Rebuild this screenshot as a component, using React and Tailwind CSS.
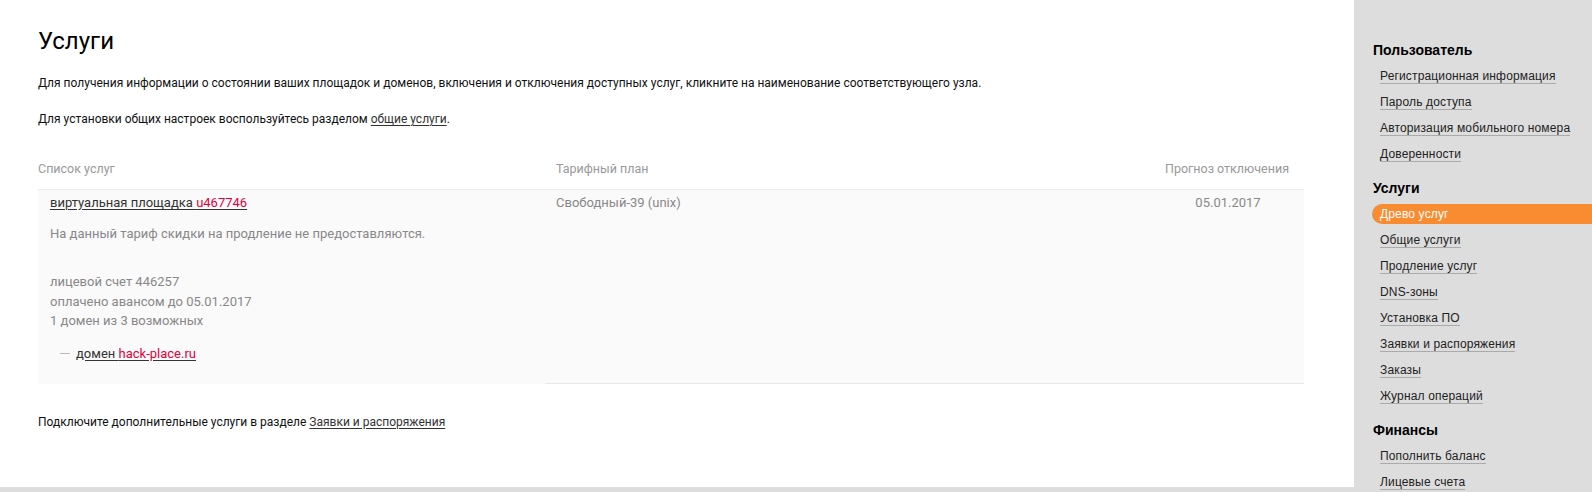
import React from 'react';

const sections = [
    {
        title: 'Пользователь',
        items: ['Регистрационная информация', 'Пароль доступа', 'Авторизация мобильного номера', 'Доверенности'],
    },
    {
        title: 'Услуги',
        items: ['Древо услуг', 'Общие услуги', 'Продление услуг', 'DNS-зоны', 'Установка ПО', 'Заявки и распоряжения', 'Заказы', 'Журнал операций'],
        active: 'Древо услуг',
    },
    {
        title: 'Финансы',
        items: ['Пополнить баланс', 'Лицевые счета'],
    },
];

function Sidebar() {
    return (
        <aside className="w-[238px] shrink-0 bg-[#dddddd] pt-[37px] font-['Liberation_Sans',Arial,sans-serif]">
            {sections.map((s, i) => (
                <div key={s.title} className={i > 0 ? 'mt-[8px]' : ''}>
                    <div className="h-[26px] flex items-center pl-[19px] text-[14px] font-bold text-black">{s.title}</div>
                    {s.items.map((item) =>
                        item === s.active ? (
                            <div key={item} className="h-[26px] flex items-center pl-[18px]">
                                <span className="flex-1 h-[20px] flex items-center pl-[8px] rounded-l-full bg-[#f98b30] text-white text-[12px] tracking-[0.15px]">
                                    {item}
                                </span>
                            </div>
                        ) : (
                            <div key={item} className="h-[26px] flex items-center pl-[26px]">
                                <a href="#" className="inline-block leading-[14px] text-[12px] tracking-[0.15px] text-[#222] border-b border-[#aaaaaa]">
                                    {item}
                                </a>
                            </div>
                        )
                    )}
                </div>
            ))}
        </aside>
    );
}

function ServicesTable() {
    return (
        <div className="mt-[30px] text-[13px]">
            <div className="flex text-[#999] text-[12.5px] leading-[20px] pb-[10px] border-b border-[#ececec]">
                <div className="w-[507px]">Список услуг</div>
                <div className="flex-1 pl-[11px]">Тарифный план</div>
                <div className="w-[150px] text-right pr-[15px]">Прогноз отключения</div>
            </div>
            <div className="flex bg-[#fafafa]">
                <div className="w-[507px] pl-[12px] pt-[3px] pb-[20px] leading-[20px]">
                    <a href="#" className="text-[#333] underline underline-offset-2 decoration-[#333]">
                        виртуальная площадка <span className="text-[#e2003c] decoration-[#333]">u467746</span>
                    </a>
                    <div className="mt-[11px] text-[#888]">На данный тариф скидки на продление не предоставляются.</div>
                    <div className="mt-[28px] text-[#888] leading-[19.5px]">
                        <div>лицевой счет 446257</div>
                        <div>оплачено авансом до 05.01.2017</div>
                        <div>1 домен из 3 возможных</div>
                    </div>
                    <div className="mt-[13px] flex items-center pl-[10px]">
                        <span className="w-[10px] h-px bg-[#bbb] mr-[6px]" />
                        <a href="#" className="text-[#333] underline underline-offset-2 decoration-[#333]">
                            домен <span className="text-[#e2003c]">hack-place.ru</span>
                        </a>
                    </div>
                </div>
                <div className="flex-1 flex border-b border-[#e8e8e8]">
                    <div className="flex-1 pl-[11px] pt-[3px] leading-[20px] text-[#888]">Свободный-39 (unix)</div>
                    <div className="w-[150px] pt-[3px] leading-[20px] text-[#888] text-center pr-[2px]">05.01.2017</div>
                </div>
            </div>
        </div>
    );
}

export default function App() {
    return (
        <div className="flex h-[492px] w-[1592px] overflow-hidden bg-white">
            <main className="flex-1 flex flex-col font-['Roboto',Arial,sans-serif]">
                <div className="pl-[38px] pr-[50px] pt-[26px]">
                    <h1 className="text-[24px] leading-[30px] text-black">Услуги</h1>
                    <p className="mt-[17px] text-[12px] leading-[20px] text-[#111]">
                        Для получения информации о состоянии ваших площадок и доменов, включения и отключения доступных услуг, кликните на наименование соответствующего узла.
                    </p>
                    <p className="mt-[16px] text-[12px] leading-[20px] text-[#111]">
                        Для установки общих настроек воспользуйтесь разделом{' '}
                        <a href="#" className="text-[#333] underline underline-offset-2">общие услуги</a>.
                    </p>
                    <ServicesTable />
                    <p className="mt-[28px] text-[12px] leading-[20px] text-[#111]">
                        Подключите дополнительные услуги в разделе{' '}
                        <a href="#" className="text-[#333] underline underline-offset-2">Заявки и распоряжения</a>
                    </p>
                </div>
                <div className="mt-auto h-[5px] bg-[#dddddd]" />
            </main>
            <Sidebar />
        </div>
    );
}
